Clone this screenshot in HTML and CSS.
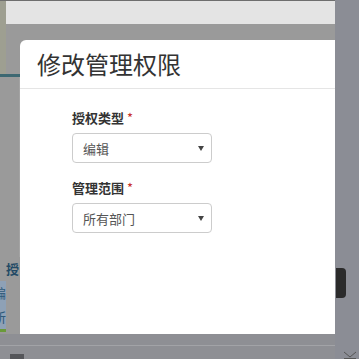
FILE: index.html
```html
<!DOCTYPE html>
<html lang="zh-CN">
<head>
    <meta charset="UTF-8">
    <meta name="viewport" content="width=device-width, initial-scale=1.0">
    <title>修改管理权限</title>
    <link rel="stylesheet" href="styles.css">
</head>
<body>
    <div class="screen">
        <div class="app">
            <div class="topbar">
                <div class="topbar-edge"></div>
                <div class="topbar-fill"></div>
            </div>
            <div class="main">
                <div class="side">
                    <div class="side-olive"></div>
                    <div class="side-line"></div>
                    <div class="side-gap"></div>
                    <div class="side-item side-title">授</div>
                    <div class="side-item side-blue">编</div>
                    <div class="side-item side-blue">所</div>
                    <div class="side-green"></div>
                </div>
            </div>
            <div class="bottombar">
                <div class="bottom-line"></div>
                <div class="bottom-row">
                    <span class="bottom-square"></span>
                </div>
            </div>

            <div class="modal">
                <div class="modal-header">修改管理权限</div>
                <div class="modal-body">
                    <div class="field">
                        <label class="field-label">授权类型 <span class="req">*</span></label>
                        <div class="select">
                            <span>编辑</span>
                            <span class="caret"></span>
                        </div>
                    </div>
                    <div class="field">
                        <label class="field-label">管理范围 <span class="req">*</span></label>
                        <div class="select">
                            <span>所有部门</span>
                            <span class="caret"></span>
                        </div>
                    </div>
                </div>
            </div>
        </div>
        <div class="rail">
            <div class="rail-space"></div>
            <div class="rail-handle"></div>
            <div class="rail-space2"></div>
            <div class="rail-chevron">
                <svg width="14" height="8" viewBox="0 0 14 8"><path d="M1 1 L7 6 L13 1 M1 7.5 H13" fill="none" stroke="#555" stroke-width="1"/></svg>
            </div>
        </div>
    </div>
</body>
</html>
```

FILE: styles.css
```css
* {
    margin: 0;
    padding: 0;
    box-sizing: border-box;
}
body {
    width: 359px;
    height: 359px;
    overflow: hidden;
    font-family: "Noto Sans CJK SC", "Noto Sans", sans-serif;
    background-color: #8b8d95;
}
.screen {
    display: grid;
    grid-template-columns: 335px 24px;
    height: 359px;
}
.app {
    position: relative;
    display: flex;
    flex-direction: column;
    height: 359px;
    overflow: hidden;
    background-color: #9a9a9a;
}
.topbar {
    display: flex;
    height: 24px;
    border-top: 1px solid #6e6e6e;
}
.topbar-edge {
    width: 6px;
    background-color: #9e9f91;
}
.topbar-fill {
    flex: 1;
    background-color: #e4e4e4;
}
.main {
    flex: 1;
    display: flex;
}
.side {
    width: 20px;
    display: flex;
    flex-direction: column;
}
.side-olive {
    width: 6px;
    height: 50px;
    background-color: #9e9f91;
}
.side-line {
    height: 3px;
    background-color: #3d6872;
}
.side-gap {
    height: 180px;
    border-right: 1px solid #a4a4a4;
}
.side-item {
    height: 24px;
    font-size: 13px;
    line-height: 24px;
    overflow: hidden;
    color: #2f5a7a;
}
.side-title {
    padding-left: 6px;
    font-weight: bold;
    color: #234a66;
}
.side-blue {
    width: 6px;
    text-indent: -7px;
    background-color: #8ea1b6;
}
.side-green {
    width: 6px;
    height: 3px;
    background-color: #6a9a3a;
}
.bottombar {
    height: 25px;
    background-color: #8e8f94;
    display: flex;
    flex-direction: column;
}
.bottom-line {
    height: 12px;
    border-bottom: 1px solid #a2a3a7;
}
.bottom-row {
    flex: 1;
    display: flex;
    align-items: flex-end;
    padding-left: 10px;
}
.bottom-square {
    width: 14px;
    height: 5px;
    background-color: #55565a;
}
.modal {
    position: absolute;
    top: 40px;
    left: 20px;
    width: 330px;
    height: 294px;
    background-color: #fff;
    border-top-left-radius: 6px;
}
.modal-header {
    height: 49px;
    padding: 0 17px;
    font-size: 24px;
    line-height: 47px;
    color: #333;
    border-bottom: 1px solid #e5e5e5;
}
.modal-body {
    padding: 20px 0 0 52px;
}
.field + .field {
    margin-top: 16px;
}
.field-label {
    display: block;
    font-size: 13px;
    font-weight: bold;
    line-height: 18px;
    color: #333;
    margin-bottom: 6px;
}
.req {
    color: #c9302c;
    font-weight: normal;
}
.select {
    display: flex;
    align-items: center;
    justify-content: space-between;
    width: 140px;
    height: 30px;
    padding: 0 7px 0 10px;
    font-size: 13px;
    color: #555;
    border: 1px solid #ccc;
    border-radius: 4px;
}
.caret {
    width: 0;
    height: 0;
    border-left: 3px solid transparent;
    border-right: 3px solid transparent;
    border-top: 5px solid #444;
}
.rail {
    display: flex;
    flex-direction: column;
}
.rail-space {
    height: 268px;
}
.rail-handle {
    width: 10px;
    height: 30px;
    margin-left: 1px;
    background-color: #2b2b2b;
    border-radius: 0 4px 4px 0;
}
.rail-space2 {
    height: 42px;
}
.rail-chevron {
    padding-left: 8px;
}
```
